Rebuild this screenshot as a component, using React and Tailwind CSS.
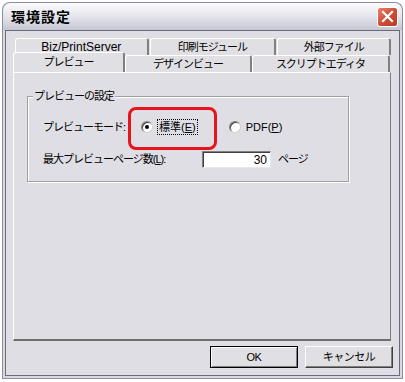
const font = { fontFamily: '"Liberation Sans", "Noto Sans CJK JP", sans-serif' };

function Tab({ w, children, selected, tight }) {
  return (
    <div
      className={`flex items-center justify-center whitespace-nowrap bg-[#e0dfe3] border-l border-t border-white border-r-2 border-r-[#808080] rounded-t-[3px] leading-none text-black ${tight ? "text-[11px] tracking-[-1px]" : "text-[12px]"} ${selected ? "relative z-10 h-[20px] -mt-[3px] border-b-0" : "h-[17px]"}`}
      style={{ width: w }}
    >
      {children}
    </div>
  );
}

function Radio({ checked }) {
  return (
    <span className="inline-flex shrink-0 w-[12px] h-[12px] rounded-full bg-white border border-t-[#808080] border-l-[#808080] border-r-[#d4d0c8] border-b-[#d4d0c8] items-center justify-center shadow-[inset_1px_1px_0_#404040]">
      {checked && <span className="w-[4px] h-[4px] rounded-full bg-black" />}
    </span>
  );
}

function Btn({ children, def }) {
  return (
    <div className={`w-[88px] h-[22px] flex items-center justify-center text-[11px] tracking-[-0.5px] text-black bg-[#e0dfe3] ${def ? "border border-black shadow-[inset_1px_1px_0_white,inset_-1px_-1px_0_#808080]" : "border border-t-white border-l-white border-r-[#404040] border-b-[#404040] shadow-[inset_-1px_-1px_0_#808080]"}`}>
      {children}
    </div>
  );
}

export default function App() {
  return (
    <div className="w-[405px] h-[382px] bg-white overflow-hidden" style={font}>
      <div className="ml-[2px] mt-[2px] w-[401px] h-[377px] flex flex-col">
        {/* title bar */}
        <div className="h-[28px] shrink-0 rounded-t-[8px] border border-b-0 border-[#8c8ca2] bg-gradient-to-b from-[#fbfbfd] via-[#e4e4ec] to-[#c6c6d2] flex items-center pl-[8px] pr-[4px]">
          <span className="text-[14px] font-bold text-black tracking-[1px]" style={{ fontFamily: '"Noto Sans CJK JP", sans-serif' }}>
            環境設定
          </span>
          <div className="ml-auto w-[21px] h-[20px] rounded-[3px] border border-white bg-gradient-to-br from-[#e8806a] via-[#d14e37] to-[#b73a25] flex items-center justify-center">
            <svg width="13" height="13" viewBox="0 0 13 13">
              <path d="M2 2 L11 11 M11 2 L2 11" stroke="white" strokeWidth="2.2" strokeLinecap="square" />
            </svg>
          </div>
        </div>
        {/* body */}
        <div className="flex-1 border-x border-b border-[#8c8ca2] bg-[#d8d8e0] px-[2px] pb-[2px] flex">
          <div className="flex-1 bg-[#dedee4] border border-[#6a6a7c] flex flex-col pl-[7px]">
            <div className="mt-[7px] w-[378px]">
              <div className="flex gap-[1px] pl-[2px] h-[17px]">
                <Tab w={134}>Biz/PrintServer</Tab>
                <Tab w={127} tight>印刷モジュール</Tab>
                <Tab w={114} tight>外部ファイル</Tab>
              </div>
              <div className="flex items-start h-[17px]">
                <Tab w={112} selected tight>プレビュー</Tab>
                <Tab w={127} tight>デザインビュー</Tab>
                <Tab w={138} tight>スクリプトエディタ</Tab>
              </div>
              {/* panel */}
              <div className="h-[269px] bg-[#dedee4] border-l border-t border-white border-r border-b-2 border-r-[#808080] border-b-[#716f64] pt-[23px] pl-[13px]">
                <div className="relative w-[322px] h-[86px] border border-[#a0a0a0] shadow-[inset_1px_1px_0_white,1px_1px_0_white] text-[11px] tracking-[-1px] text-black">
                  <span className="absolute -top-[9px] left-[5px] px-[1px] bg-[#dedee4] leading-[16px] whitespace-nowrap">
                    プレビューの設定
                  </span>
                  <div className="flex items-center mt-[22px] ml-[15px] h-[16px] whitespace-nowrap">
                    <span className="w-[98px] shrink-0">プレビューモード:</span>
                    <div className="relative flex items-center">
                      <div className="absolute left-[-13px] top-[-12px] w-[89px] h-[43px] border-[3px] border-[#e8141a] rounded-[8px]" />
                      <Radio checked />
                      <span className="ml-[4px] px-[1px] border border-dotted border-black leading-[14px] tracking-[0px]">
                        標準(<span className="underline">E</span>)
                      </span>
                    </div>
                    <div className="flex items-center ml-[31px]">
                      <Radio />
                      <span className="ml-[5px] leading-[16px] tracking-[0px]">
                        PDF(<span className="underline">P</span>)
                      </span>
                    </div>
                  </div>
                  <div className="flex items-center mt-[16px] ml-[15px] h-[17px] whitespace-nowrap">
                    <span className="w-[159px] shrink-0">
                      最大プレビューページ数(<span className="underline">L</span>):
                    </span>
                    <div className="w-[69px] h-[17px] shrink-0 bg-white border border-t-[#808080] border-l-[#808080] border-r-[#e8e8e8] border-b-[#e8e8e8] shadow-[inset_1px_1px_0_#404040] flex items-center justify-end pr-[3px] text-[12px] tracking-[0px]">
                      30
                    </div>
                    <span className="ml-[7px]">ページ</span>
                  </div>
                </div>
              </div>
            </div>
            <div className="flex justify-end gap-[7px] mt-[5px] w-[380px]">
              <Btn def>OK</Btn>
              <Btn>キャンセル</Btn>
            </div>
          </div>
        </div>
      </div>
    </div>
  );
}
